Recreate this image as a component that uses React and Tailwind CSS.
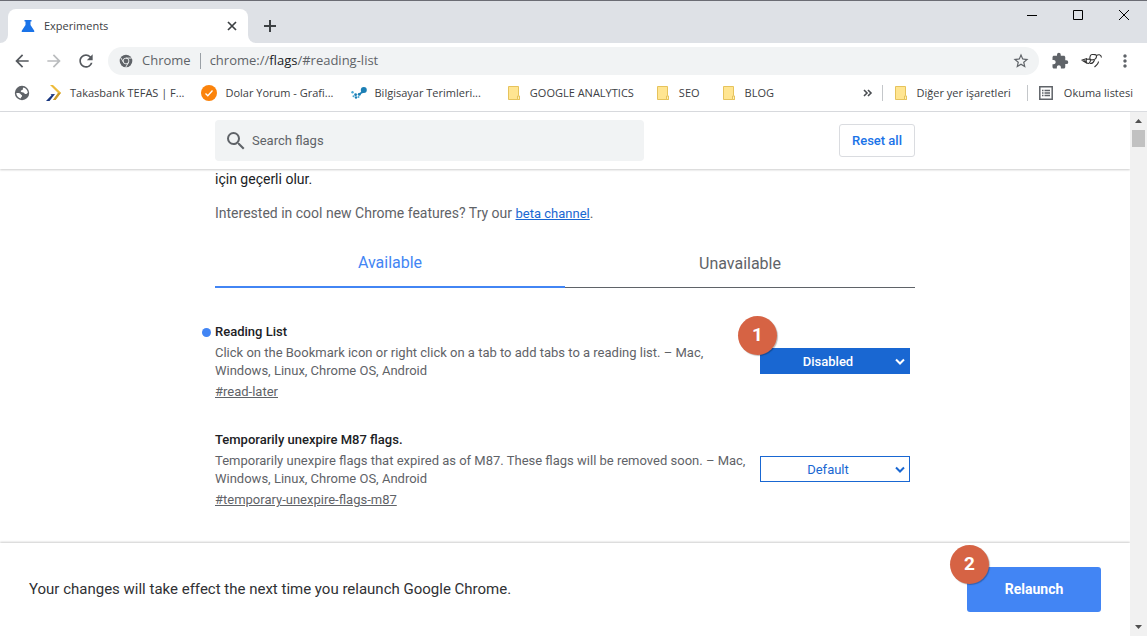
import React from "react";
import {
  MdArrowBack,
  MdArrowForward,
  MdExtension,
  MdMoreVert,
  MdRefresh,
  MdSearch,
  MdStarBorder,
} from "react-icons/md";

function Flask() {
  return (
    <svg width="14" height="14" viewBox="0 0 14 14" aria-hidden="true">
      <path d="M3.500 1h7v1.400h-1V6l3.600 5.400c.6.9.2 1.600-.9 1.600H1.800c-1.100 0-1.500-.7-.9-1.600L4.500 6V2.400h-1z" fill="#1a73e8" />
    </svg>
  );
}

function ChromeMark() {
  return (
    <svg width="14" height="14" viewBox="0 0 14 14" aria-hidden="true" className="shrink-0">
      <circle cx="7" cy="7" r="6.300" fill="#5f6368" />
      <circle cx="7" cy="7" r="2.900" fill="none" stroke="#f1f3f4" strokeWidth="0.900" />
      <path d="M7 4.100h5.600M4.500 8.400 1.700 3.600M9.500 8.400 6.700 13.300" stroke="#f1f3f4" strokeWidth="0.900" fill="none" />
    </svg>
  );
}

function Globe() {
  return (
    <svg width="16" height="16" viewBox="0 0 16 16" aria-hidden="true">
      <circle cx="8" cy="8" r="7.200" fill="#5f6368" />
      <path d="M2.300 8c1.700-.2 3.700-.2 4.200 1 .4 1 1.700.7 1.600 2-.1 1-1.200.8-1.300 2.500C4.200 13 2.400 10.800 2.300 8z" fill="#fff" />
      <path d="M9.500 2.500c2.500.7 4.200 2.700 4.300 5.300-1 .8-1.500 1.500-2.600 1.200-1-.3-.7-1.500-2-1.600-1.500 0-2.600-.4-2.400-1.400.2-.9 1.500-.6 1.900-1.300.4-.8-.2-1.600.8-2.200z" fill="#fff" />
    </svg>
  );
}

function Folder() {
  return (
    <svg width="14" height="16" viewBox="0 0 14 16" aria-hidden="true" className="shrink-0">
      <path d="M1.500 1.500h10v9l1 .8v3.200h-11z" fill="#ffe591" stroke="#e6c35c" />
      <path d="M10.500 14.500v-3.500h2v3.500z" fill="#fff0b5" stroke="#e6c35c" />
    </svg>
  );
}

function Takas() {
  return (
    <svg width="16" height="16" viewBox="0 0 16 16" aria-hidden="true">
      <path d="M4 0h3l8 7.800L9.500 15H7l5-7z" fill="#edbb3a" />
      <path d="m12 8 3-.2L9.500 15H7z" fill="#c99a2c" />
      <path d="M0 16h3.500L9 9l-4.500.2 1 1z" fill="#16357f" />
    </svg>
  );
}

function Tick() {
  return (
    <svg width="16" height="16" viewBox="0 0 16 16" aria-hidden="true">
      <circle cx="8" cy="8" r="8" fill="#fb830b" />
      <path d="m4.500 8.500 2.300 2.300 4.700-5.300" fill="none" stroke="#fff" strokeWidth="1.300" />
    </svg>
  );
}

function Dots() {
  return (
    <svg width="16" height="16" viewBox="0 0 16 16" aria-hidden="true">
      <g fill="#1c7fb5">
        <circle cx="12.800" cy="5" r="3" />
        <path d="m11 5.500-2.500 3 .8.800L13 7.500z" />
        <circle cx="8.300" cy="9.300" r="1.500" />
        <circle cx="1.500" cy="7.300" r="1.200" fill="#45a7d4" />
        <circle cx="4.600" cy="9.700" r="1.400" />
        <circle cx="2.500" cy="11.300" r="1" fill="#45a7d4" />
        <circle cx="5" cy="12.500" r="1.200" />
        <circle cx="7.500" cy="12" r="1" fill="#45a7d4" />
      </g>
    </svg>
  );
}

function Bookmark({ icon, label, gap = "gap-2" }) {
  return (
    <a href="#bookmark" className={`flex shrink-0 items-center whitespace-nowrap ${gap}`}>
      {icon}
      <span>{label}</span>
    </a>
  );
}

function TitleBar() {
  return (
    <header className="flex h-[43px] shrink-0 items-end border-t border-[#6b6c74] bg-[#dee1e6]">
      <div className="w-2 self-stretch bg-white">
        <div className="h-full w-full rounded-br-lg bg-[#dee1e6]" />
      </div>
      <div className="flex h-[34px] w-60 items-center rounded-t-lg bg-white pr-2 pl-[13px]">
        <Flask />
        <span className="ml-[9px] flex-1 text-[11px] text-[#3c4043]">Experiments</span>
        <button aria-label="Close tab" className="flex size-4 items-center justify-center">
          <svg width="10" height="10" viewBox="0 0 10 10"><path d="m1 1 8 8M9 1 1 9" stroke="#3c4043" strokeWidth="1.700" /></svg>
        </button>
      </div>
      <div className="w-2 self-stretch bg-white">
        <div className="h-full w-full rounded-bl-lg bg-[#dee1e6]" />
      </div>
      <button aria-label="New tab" className="flex h-[34px] w-7 items-center justify-center">
        <svg width="14" height="14" viewBox="0 0 14 14"><path d="M7 1v12M1 7h12" stroke="#3c4043" strokeWidth="2" /></svg>
      </button>
      <div className="ml-auto flex self-start text-black">
        <button aria-label="Minimize" className="flex h-7 w-[46px] items-center justify-center">
          <svg width="10" height="10" viewBox="0 0 10 10"><path d="M0 5.500h10" stroke="currentColor" /></svg>
        </button>
        <button aria-label="Maximize" className="flex h-7 w-[46px] items-center justify-center">
          <svg width="10" height="10" viewBox="0 0 10 10"><path d="M.5.5h9v9h-9z" fill="none" stroke="currentColor" /></svg>
        </button>
        <button aria-label="Close" className="flex h-7 w-[46px] items-center justify-center">
          <svg width="10" height="10" viewBox="0 0 10 10"><path d="m0 0 10 10M10 0 0 10" stroke="currentColor" /></svg>
        </button>
      </div>
    </header>
  );
}

function Toolbar() {
  return (
    <div className="flex h-9 shrink-0 items-center px-3">
      <div className="flex gap-3 text-[20px] text-[#55595e]">
        <button aria-label="Back"><MdArrowBack /></button>
        <button aria-label="Forward" className="text-[#babcbe]"><MdArrowForward /></button>
        <button aria-label="Reload"><MdRefresh /></button>
      </div>
      <div className="ml-3 flex h-7 flex-1 items-center rounded-full bg-[#f1f3f4] pr-[9px] pl-[11px] text-[13px] text-[#5f6368]">
        <ChromeMark />
        <span className="ml-[9px]">Chrome</span>
        <span className="mx-[9px] h-4 w-px bg-[#9aa0a6]" />
        <span className="flex-1">chrome://<span className="text-[#202124]">flags</span>/#reading-list</span>
        <button aria-label="Bookmark this page" className="text-[18px]"><MdStarBorder /></button>
      </div>
      <div className="ml-3 flex items-center gap-3 text-[#5f6368]">
        <button aria-label="Extensions" className="text-[18px]"><MdExtension /></button>
        <button aria-label="Profile">
          <svg width="22" height="16" viewBox="0 0 22 16" fill="none" stroke="#333" strokeWidth="1.100">
            <path d="M.5 7.200 6 5.500M1 7.200l5 3M2.500 7.500 5 8.200" />
            <path d="M5.500 6.200 9 6c1 1.500 0 4.200-1.700 4.500-2 .2-2.500-2.500-1.800-4.300z" />
            <path d="M9 6C8.500 4 9.500 1.500 11 1.500s4.500-.3 4.500 1.500S14 6.500 12 6.800c-1.500.2-2.700.2-3-.8z" />
            <path d="M15.500 2.500c1.500-1 4.500-1.500 5 2M17.500 8.500c0 2-1.500 3.500-4 5.500M9 10.500c1.500.3 3.500-1 4.500-3.500" />
          </svg>
        </button>
        <button aria-label="Menu" className="text-[20px]"><MdMoreVert /></button>
      </div>
    </div>
  );
}

function Bookmarks() {
  return (
    <nav className="flex h-[33px] shrink-0 items-center border-b border-[#dadce0] pr-[14px] pb-1 pl-[14px] text-[11px] text-[#3c4043]">
      <a href="#web" aria-label="Web"><Globe /></a>
      <div className="ml-4 flex flex-1 items-center">
        <div className="flex gap-[17px]">
          <Bookmark icon={<Takas />} label="Takasbank TEFAS | F..." />
          <Bookmark icon={<Tick />} label="Dolar Yorum - Grafi..." />
          <Bookmark icon={<Dots />} label="Bilgisayar Terimleri..." />
        </div>
        <div className="ml-[26px] flex gap-[22px]">
          <Bookmark icon={<Folder />} label="GOOGLE ANALYTICS" gap="gap-[9px]" />
          <Bookmark icon={<Folder />} label="SEO" gap="gap-[9px]" />
          <Bookmark icon={<Folder />} label="BLOG" gap="gap-[9px]" />
        </div>
      </div>
      <button aria-label="More bookmarks">
        <svg width="10" height="8" viewBox="0 0 10 8" fill="none" stroke="#4a4d51" strokeWidth="1.600"><path d="m1 1 3 3-3 3M5 1l3 3-3 3" /></svg>
      </button>
      <span className="mr-[11px] ml-[9px] h-4 w-px bg-[#c4c7ca]" />
      <Bookmark icon={<Folder />} label="Diğer yer işaretleri" gap="gap-[9px]" />
      <span className="mr-[11px] ml-4 h-4 w-px bg-[#c4c7ca]" />
      <Bookmark
        gap="gap-[11px]"
        icon={<svg width="14" height="14" viewBox="0 0 14 14"><path d="M.8.8h12.400v12.400H.8z" fill="none" stroke="#5f6368" strokeWidth="1.500" /><path d="M3 4.500h1.500M5.500 4.500H11M3 7h1.500M5.500 7H11M3 9.500h1.500M5.500 9.500H11" stroke="#5f6368" strokeWidth="1.300" /></svg>}
        label="Okuma listesi"
      />
    </nav>
  );
}

function Step({ n, place }) {
  return (
    <span className={`absolute z-10 flex size-[39px] items-center justify-center rounded-full bg-[#d66344] text-[19px] font-bold text-white shadow-[1px_1px_1px_#0004] ${place}`}>
      {n}
    </span>
  );
}

function Flag({ id, title, text, options, changed, step }) {
  return (
    <section className="flex h-[108px] items-start">
      <div className="flex-1">
        <h3 className="relative text-[13px] leading-5 font-medium text-[#202124]">
          {changed && <span className="absolute top-[6px] -left-[13px] size-[9px] rounded-full bg-[#4285f4]" />}
          <label htmlFor={id}>{title}</label>
        </h3>
        <p className="mt-[2px] text-[13px] leading-[18px] text-[#5f6368]">{text}</p>
        <a href={`#${id}`} className="mt-[2px] block w-fit text-[13px] leading-5 text-[#5f6368] underline">#{id}</a>
      </div>
      <div className="relative mt-[26px] mr-[5px] ml-1 w-[150px] shrink-0">
        {step && <Step n={step} place="-top-8 -left-[22px]" />}
        <select
          id={id}
          className={`h-[26px] w-full appearance-none rounded-none border border-[#1967d2] pt-[2px] pr-[14px] text-center text-[13px] ${changed ? "bg-[#1967d2] font-medium text-white" : "bg-white text-[#1967d2]"}`}
        >
          {options.map((o) => <option key={o}>{o}</option>)}
        </select>
        <svg width="10" height="8" viewBox="0 0 10 8" fill="none" stroke={changed ? "#fff" : "#1967d2"} strokeWidth="2" className="pointer-events-none absolute top-[10px] right-[5px]"><path d="m1 1.500 4 4 4-4" /></svg>
      </div>
    </section>
  );
}

export default function App() {
  return (
    <div className="flex h-screen flex-col overflow-hidden bg-white font-[Roboto,sans-serif]">
      <div className="shrink-0 font-['Open_Sans','Noto_Sans',sans-serif]">
        <TitleBar />
        <Toolbar />
        <Bookmarks />
      </div>
      <div className="flex min-h-0 flex-1">
        <div className="flex min-w-0 flex-1 flex-col">
          <div className="z-10 shrink-0 bg-white py-2 shadow-[0_1px_2px_#0003]">
            <div className="mx-auto flex w-full max-w-[700px] items-center justify-between">
              <label className="flex h-[41px] w-[429px] items-center gap-1 rounded-sm bg-[#f1f3f4] pl-[9px]">
                <MdSearch size={24} color="#5f6368" />
                <input type="search" aria-label="Search flags" placeholder="Search flags" className="min-w-0 flex-1 bg-transparent text-[13px] text-[#202124] outline-none placeholder:text-[#5f6368]" />
              </label>
              <button className="h-[33px] rounded-[3px] border border-[#dadce0] px-3 text-[13px] font-medium text-[#1a73e8]">Reset all</button>
            </div>
          </div>
          <main className="mx-auto min-h-0 w-full max-w-[700px] flex-1">
            <p className="text-[14px] leading-5 text-[#202124]">için geçerli olur.</p>
            <p className="mt-[14px] text-[14px] leading-5 text-[#5f6368]">
              Interested in cool new Chrome features? Try our <a href="#beta" className="text-[13px] text-[#1967d2] underline">beta channel</a>.
            </p>
            <div role="tablist" className="mt-4 flex h-12 text-[16px]">
              <button role="tab" aria-selected="true" className="flex-1 border-b-2 border-[#4285f4] text-[#4285f4]">Available</button>
              <button role="tab" aria-selected="false" className="flex-1 border-b border-[#5f6368] text-[#5f6368]">Unavailable</button>
            </div>
            <div className="mt-[34px]">
              <Flag id="read-later" title="Reading List" text="Click on the Bookmark icon or right click on a tab to add tabs to a reading list. – Mac, Windows, Linux, Chrome OS, Android" options={["Disabled", "Default", "Enabled"]} changed step="1" />
              <Flag id="temporary-unexpire-flags-m87" title="Temporarily unexpire M87 flags." text="Temporarily unexpire flags that expired as of M87. These flags will be removed soon. – Mac, Windows, Linux, Chrome OS, Android" options={["Default", "Enabled", "Disabled"]} />
            </div>
          </main>
          <footer className="z-10 flex shrink-0 items-center justify-between bg-white py-6 pr-[29px] pl-[29px] shadow-[0_-1px_2px_#0003]">
            <p className="text-[15px] text-[#303134]">Your changes will take effect the next time you relaunch Google Chrome.</p>
            <div className="relative">
              <Step n="2" place="-top-[22px] -left-[17px]" />
              <button className="h-[45px] w-[134px] rounded-[3px] bg-[#4285f4] text-[14px] font-bold text-white">Relaunch</button>
            </div>
          </footer>
        </div>
        <div className="z-20 flex w-[17px] shrink-0 flex-col items-center bg-[#f1f1f1]">
          <svg width="7" height="18" viewBox="0 0 7 18" className="shrink-0"><path d="M0 11h7L3.500 7z" fill="#505050" /></svg>
          <div className="h-[17px] w-[13px] bg-[#c1c1c1]" />
          <svg width="7" height="18" viewBox="0 0 7 18" className="mt-auto shrink-0"><path d="M0 7h7l-3.500 4z" fill="#505050" /></svg>
        </div>
      </div>
    </div>
  );
}
